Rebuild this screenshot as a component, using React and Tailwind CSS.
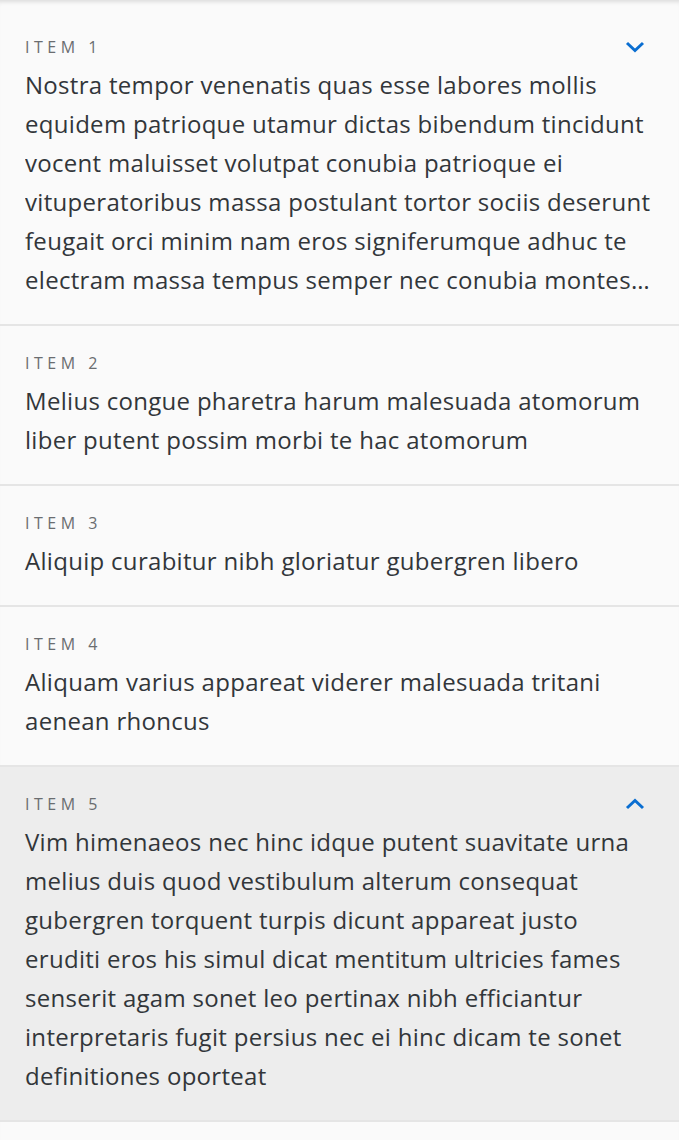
import { useState } from "react";

const items = [
  {
    id: 1,
    text: "Nostra tempor venenatis quas esse labores mollis equidem patrioque utamur dictas bibendum tincidunt vocent maluisset volutpat conubia patrioque ei vituperatoribus massa postulant tortor sociis deserunt feugait orci minim nam eros signiferumque adhuc te electram massa tempus semper nec conubia montes nisl dolores quaestio",
    chevron: "down",
  },
  {
    id: 2,
    text: "Melius congue pharetra harum malesuada atomorum liber putent possim morbi te hac atomorum",
  },
  { id: 3, text: "Aliquip curabitur nibh gloriatur gubergren libero" },
  {
    id: 4,
    text: "Aliquam varius appareat viderer malesuada tritani aenean rhoncus",
  },
  {
    id: 5,
    text: "Vim himenaeos nec hinc idque putent suavitate urna melius duis quod vestibulum alterum consequat gubergren torquent turpis dicunt appareat justo eruditi eros his simul dicat mentitum ultricies fames senserit agam sonet leo pertinax nibh efficiantur interpretaris fugit persius nec ei hinc dicam te sonet definitiones oporteat",
    chevron: "up",
    active: true,
  },
];

const Chevron = ({ dir }) => (
  <svg width="20" height="12" viewBox="0 0 20 12" className="shrink-0">
    <path
      d={dir === "up" ? "M2 10 L10 2.5 L18 10" : "M2 2 L10 9.5 L18 2"}
      fill="none"
      stroke="#0a6ed1"
      strokeWidth="3"
    />
  </svg>
);

const App = () => {
  const [open] = useState(null);

  return (
    <div
      className="min-h-[1140px] bg-[#fafafa] pt-[10px] shadow-[inset_0_5px_4px_-3px_rgba(0,0,0,0.12)]"
      style={{ fontFamily: '"Open Sans", sans-serif' }}
    >
      {items.map((item) => (
        <div
          key={item.id}
          className={`border-b-2 border-[#e5e5e5] px-[25px] pt-[24px] pb-[25px] ${
            item.active ? "bg-[#ededed]" : ""
          }`}
        >
          <div className="flex h-[26px] items-center justify-between">
            <span className="text-[16px] tracking-[4.5px] text-[#6a6d70]">
              ITEM {item.id}
            </span>
            {item.chevron && (
              <span className="mr-[9px]">
                <Chevron dir={item.chevron} />
              </span>
            )}
          </div>
          <p
            className={`mt-[5px] text-[24px] leading-[39px] tracking-[0.3px] text-[#32363a] ${
              item.id === 1 && open !== 1 ? "line-clamp-6" : ""
            }`}
          >
            {item.text}
          </p>
        </div>
      ))}
    </div>
  );
};

export default App;
